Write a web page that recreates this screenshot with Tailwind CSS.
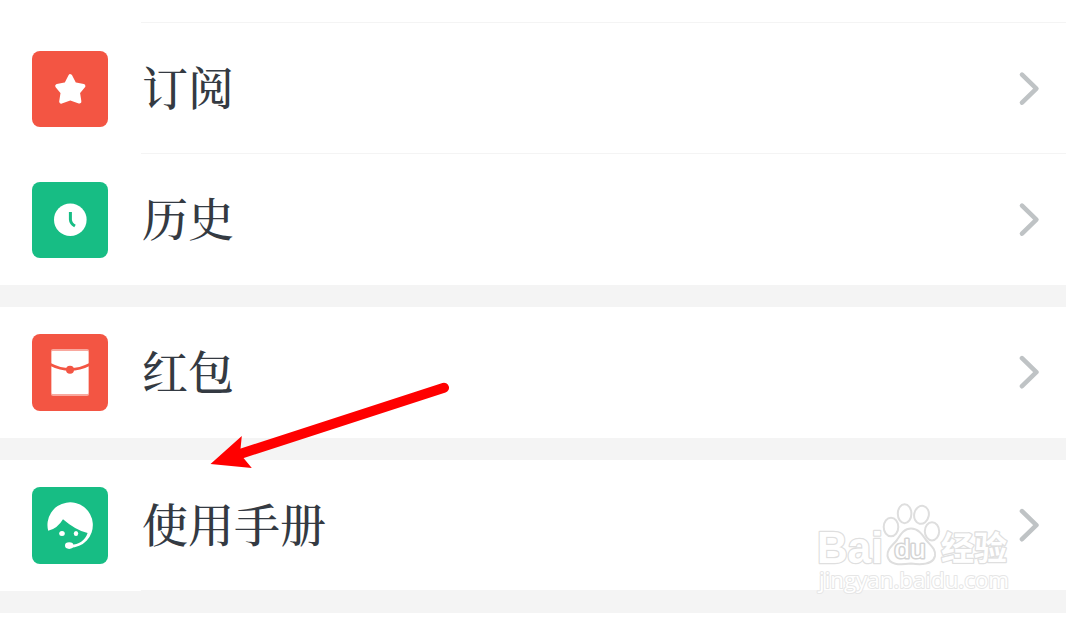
<!DOCTYPE html>
<html lang="zh-CN">
<head>
<meta charset="utf-8">
<meta name="viewport" content="width=device-width, initial-scale=1">
<title>我的</title>
<script src="https://cdn.jsdelivr.net/npm/@tailwindcss/browser@4"></script>
</head>
<body class="relative w-[1066px] h-[618px] overflow-hidden bg-white text-[46px] leading-none font-medium text-[#343a42] font-['Noto_Serif_CJK_SC','Noto_Serif_SC','Source_Han_Serif_SC','Noto_Sans_CJK_SC',serif]">
<main class="flex flex-col">
  <div class="h-[22px]"></div>
  <div class="ml-[141px] h-px bg-[#f4f4f4]"></div>
  <div class="flex h-[130px] items-center pl-8 pr-[26px] pb-px pt-[3px]">
    <svg class="size-[76px] shrink-0" viewBox="0 0 76 76"><rect width="76" height="76" rx="8" fill="#f35543"/><path d="M38.3 25.2L42.4 33.2L51.4 35L46 41.6L47.4 50.6L38.3 47.4L29.2 50.6L30.6 41.6L25.2 35L34.2 33.2Z" fill="#fff" stroke="#fff" stroke-width="4" stroke-linejoin="round"/></svg>
    <span class="ml-[34px] grow pb-2">订阅</span>
    <svg class="h-[36px] w-[22px]" viewBox="0 0 22 36" fill="none" stroke="#bfc3c5" stroke-width="4.6" stroke-linecap="round" stroke-linejoin="round"><path d="M4 3.6L18.4 17.6L4 31.6"/></svg>
  </div>
  <div class="ml-[141px] h-px bg-[#f4f4f4]"></div>
  <div class="flex h-[131px] items-center pl-8 pr-[26px] pt-px">
    <svg class="size-[76px] shrink-0" viewBox="0 0 76 76"><rect width="76" height="76" rx="8" fill="#17bd84"/><circle cx="38.3" cy="37.8" r="16.3" fill="#fff"/><path d="M38.4 30V37.5Q38.6 41.5 43 44" fill="none" stroke="#17bd84" stroke-width="3"/></svg>
    <span class="ml-[34px] grow pb-2">历史</span>
    <svg class="h-[36px] w-[22px]" viewBox="0 0 22 36" fill="none" stroke="#bfc3c5" stroke-width="4.6" stroke-linecap="round" stroke-linejoin="round"><path d="M4 3.6L18.4 17.6L4 31.6"/></svg>
  </div>
  <div class="h-[22px] bg-[#f4f4f4]"></div>
  <div class="flex h-[131px] items-center pl-8 pr-[26px]">
    <svg class="h-[77px] w-[76px] shrink-0" viewBox="0 0 76 77"><rect width="76" height="77" rx="8" fill="#f35543"/><rect x="19" y="15" width="38" height="47" rx="2" fill="#f9a89e"/><rect x="19.7" y="17" width="36.6" height="43" rx="1" fill="#fff"/><path d="M18.5 30.5Q38 40.5 57.5 30.5" fill="none" stroke="#f35543" stroke-width="2.6"/><circle cx="38" cy="35.7" r="4" fill="#f35543"/></svg>
    <span class="ml-[34px] grow pb-2">红包</span>
    <svg class="h-[36px] w-[22px]" viewBox="0 0 22 36" fill="none" stroke="#bfc3c5" stroke-width="4.6" stroke-linecap="round" stroke-linejoin="round"><path d="M4 3.2L18.4 17.2L4 31.2"/></svg>
  </div>
  <div class="h-[22px] bg-[#f4f4f4]"></div>
  <div class="flex h-[130px] items-center pl-8 pr-[26px] pt-px">
    <svg class="h-[77px] w-[76px] shrink-0" viewBox="0 0 76 77"><rect width="76" height="77" rx="8" fill="#17bd84"/><path d="M16.2 43.8A22.7 22.7 0 1 1 38 60.7V57.6C46 58 53 54 55.6 46Q44 43.5 31 32.2Q25.5 41.5 16.2 43.8Z" fill="#fff"/><ellipse cx="37.2" cy="58.6" rx="4.2" ry="3.3" fill="#fff"/><ellipse cx="30" cy="46.5" rx="2.8" ry="2.5" fill="#fff"/><ellipse cx="44" cy="46.5" rx="2.2" ry="2.5" fill="#fff"/></svg>
    <span class="ml-[34px] grow pb-2">使用手册</span>
    <svg class="h-[36px] w-[22px]" viewBox="0 0 22 36" fill="none" stroke="#bfc3c5" stroke-width="4.6" stroke-linecap="round" stroke-linejoin="round"><path d="M4 3.2L18.4 17.2L4 31.2"/></svg>
  </div>
  <div class="ml-[141px] h-px bg-[#f4f4f4]"></div>
  <div class="h-[22px] bg-[#f4f4f4]"></div>
</main>

<svg class="pointer-events-none absolute left-[200px] top-[370px] h-[110px] w-[260px]" viewBox="200 370 260 110">
  <path d="M444 387.8L240 454" stroke="#f00" stroke-width="10" stroke-linecap="round"/>
  <path d="M210.5 464L241.8 436L240.5 449L243.5 458L251.8 468Z" fill="#f00"/>
</svg>

<svg class="pointer-events-none absolute left-[806px] top-[490px] h-[110px] w-[220px]" viewBox="806 490 220 110" fill="#fff" stroke="#dfdfdf" stroke-width="2.6" stroke-linejoin="round" paint-order="stroke">
  <text x="817" y="562.5" font-size="44" textLength="66" lengthAdjust="spacingAndGlyphs" class="font-['Liberation_Sans',sans-serif] font-bold">Bai</text>
  <g stroke-width="2" stroke="#dedede" paint-order="normal">
    <ellipse cx="891" cy="527" rx="7.3" ry="9.3"/><ellipse cx="904.6" cy="513.7" rx="6.8" ry="9.5"/><ellipse cx="921.5" cy="514.8" rx="7.3" ry="9.1" transform="rotate(12 921.5 514.8)"/><ellipse cx="932" cy="531.3" rx="7.2" ry="9.1"/>
    <path d="M911 528.5C918 528.5 922 534 926 540C931 546 936 549 935 556C933 565 922 565 911 563.5C899 565 889 565 887.5 556C887 549 892 546 897 540C901 534 904 528.5 911 528.5Z"/>
  </g>
  <text x="894.5" y="558" font-size="26" stroke-width="3" stroke="#d4d4d4" textLength="31" lengthAdjust="spacingAndGlyphs" class="font-['Liberation_Sans',sans-serif] font-normal">du</text>
  <text x="941" y="560" font-size="33" textLength="66" lengthAdjust="spacingAndGlyphs" class="font-['Noto_Sans_CJK_SC',sans-serif] font-bold">经验</text>
  <text x="819" y="588" font-size="22" stroke="#e6e6e6" stroke-width="2" textLength="190" lengthAdjust="spacingAndGlyphs" class="font-['Open_Sans',sans-serif] font-normal">jingyan.baidu.com</text>
</svg>
</body>
</html>
